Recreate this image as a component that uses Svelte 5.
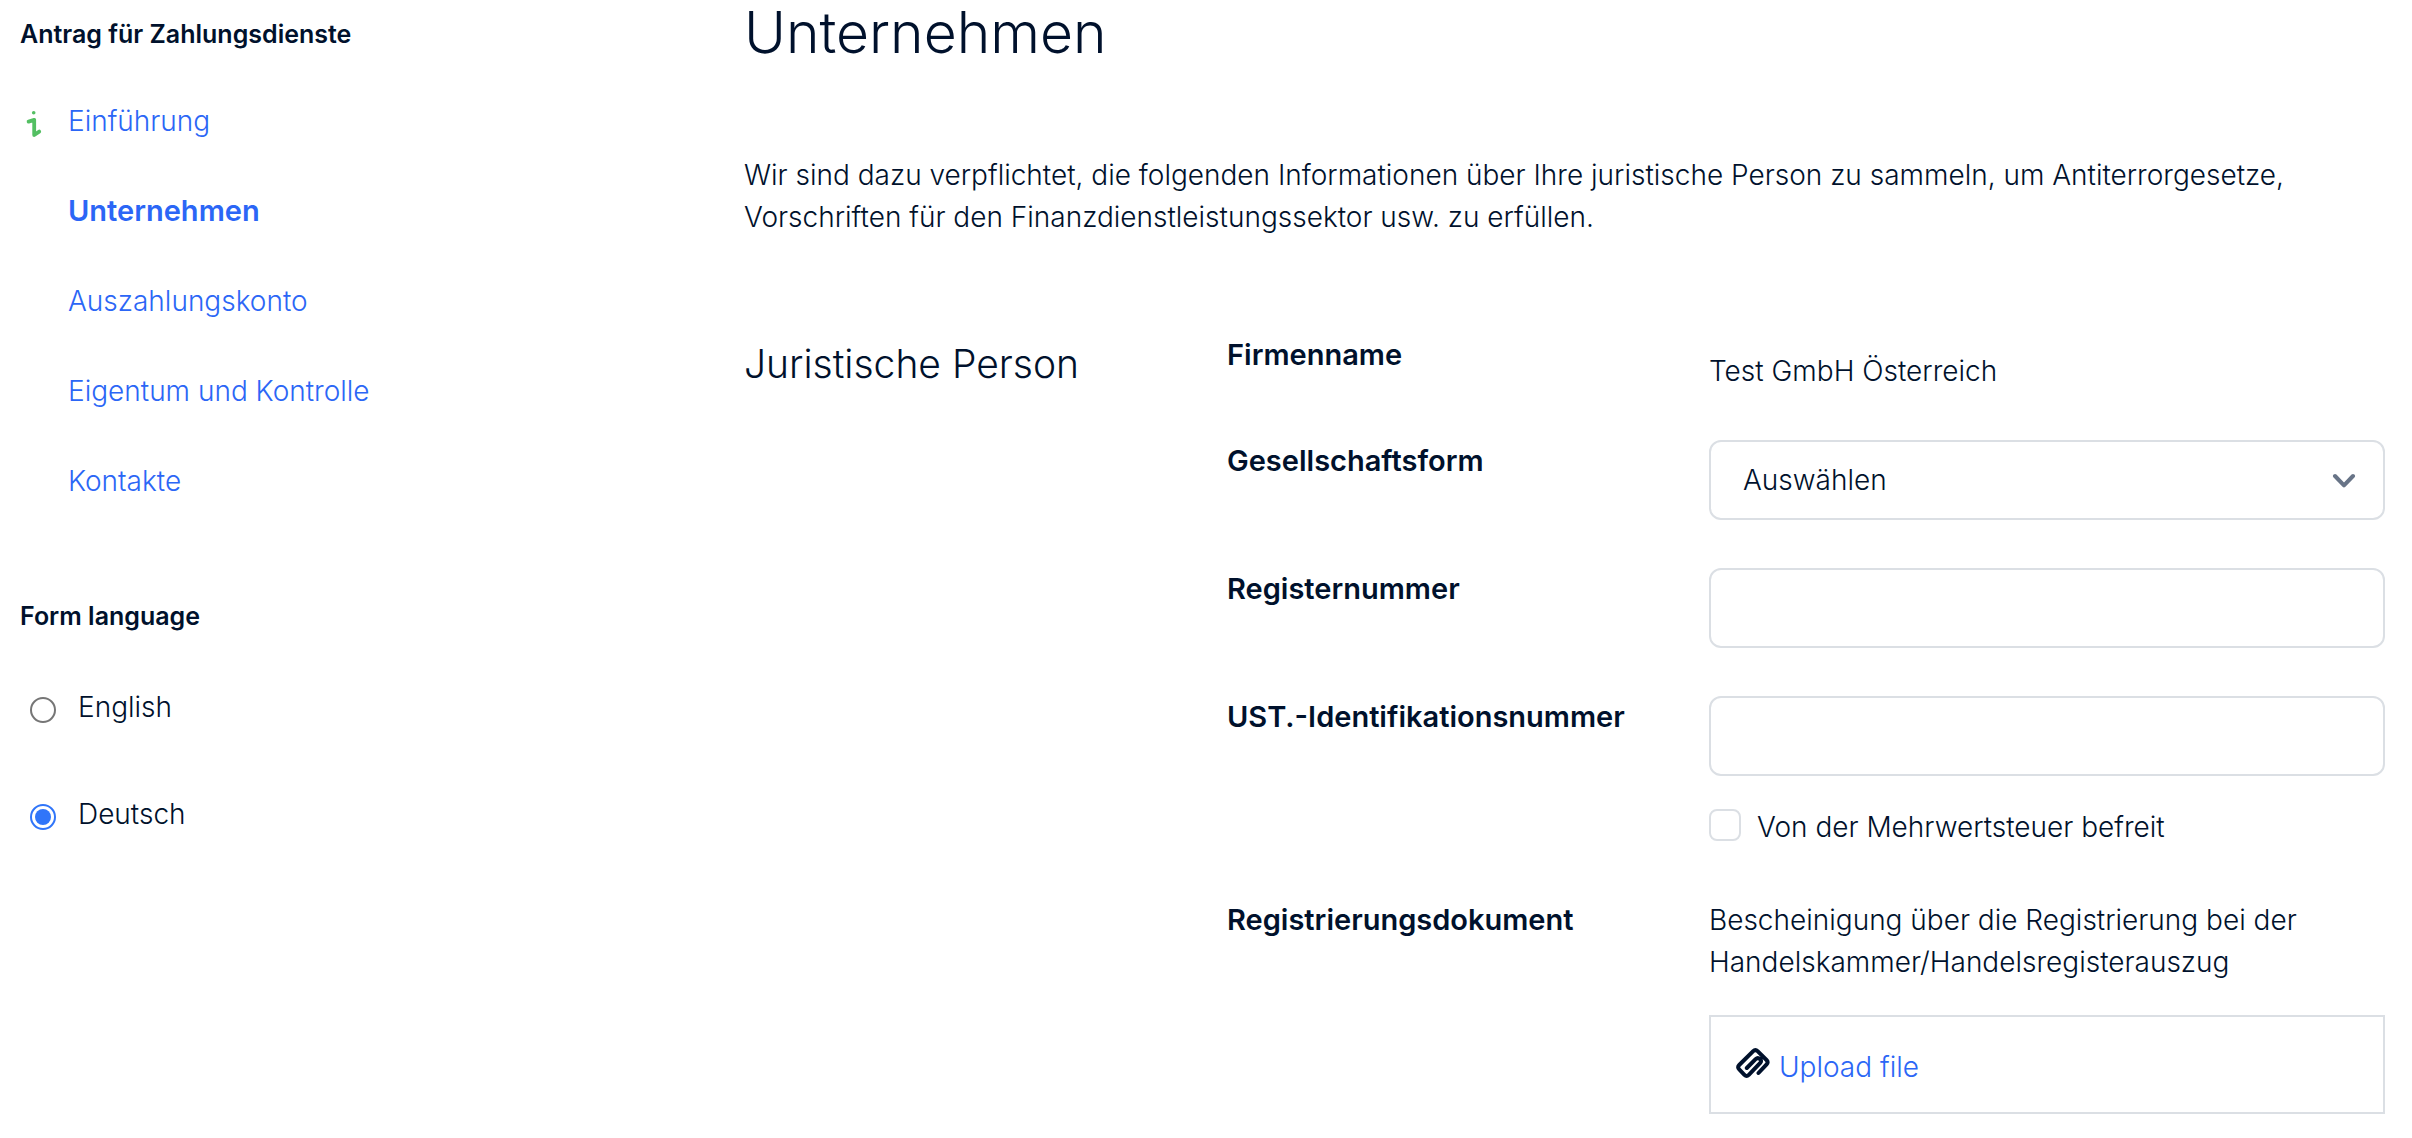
<script>
  let language = 'de';
  let legalForm = '';
  let registrationNumber = '';
  let vatNumber = '';
  let vatExempt = false;

  const steps = [
    { label: 'Einführung', href: '#einfuehrung', info: true },
    { label: 'Unternehmen', href: '#unternehmen', active: true },
    { label: 'Auszahlungskonto', href: '#auszahlungskonto' },
    { label: 'Eigentum und Kontrolle', href: '#eigentum' },
    { label: 'Kontakte', href: '#kontakte' },
  ];

  const languages = [
    { value: 'en', label: 'English' },
    { value: 'de', label: 'Deutsch' },
  ];
</script>

<div class="page">
  <aside>
    <h2>Antrag für Zahlungsdienste</h2>
    <nav>
      {#each steps as step}
        <a href={step.href} class:active={step.active}>
          <span class="marker">
            {#if step.info}
              <svg width="16" height="28" viewBox="0 0 16 28" fill="none" aria-hidden="true">
                <circle cx="7.7" cy="2.7" r="1.8" fill="#53bf62" />
                <path d="M2.6 11.6 L8.2 9.9 V25 L13.2 21.6" stroke="#53bf62" stroke-width="3.8" stroke-linecap="round" stroke-linejoin="round" />
              </svg>
            {/if}
          </span>
          {step.label}
        </a>
      {/each}
    </nav>

    <fieldset>
      <legend>Form language</legend>
      {#each languages as item}
        <label class="radio">
          <input type="radio" name="language" value={item.value} bind:group={language} />
          {item.label}
        </label>
      {/each}
    </fieldset>
  </aside>

  <main>
    <h1>Unternehmen</h1>
    <p class="intro">
      Wir sind dazu verpflichtet, die folgenden Informationen über Ihre juristische Person zu sammeln, um Antiterrorgesetze, Vorschriften für den Finanzdienstleistungssektor usw. zu erfüllen.
    </p>

    <section>
      <h3>Juristische Person</h3>
      <form>
        <div class="row">
          <span class="label">Firmenname</span>
          <div class="value">Test GmbH Österreich</div>
        </div>

        <div class="row">
          <label class="label" for="legal-form">Gesellschaftsform</label>
          <div class="select">
            <select id="legal-form" bind:value={legalForm}>
              <option value="">Auswählen</option>
              <option value="gmbh">GmbH</option>
              <option value="ag">AG</option>
            </select>
            <svg width="24" height="16" viewBox="0 0 24 16" fill="none" aria-hidden="true">
              <path d="M3 4 L12 13.4 L21 4" stroke="#687487" stroke-width="4" stroke-linecap="round" stroke-linejoin="round" />
            </svg>
          </div>
        </div>

        <div class="row">
          <label class="label" for="registration-number">Registernummer</label>
          <input class="text" id="registration-number" type="text" bind:value={registrationNumber} />
        </div>

        <div class="row">
          <label class="label" for="vat-number">UST.-Identifikationsnummer</label>
          <div>
            <input class="text" id="vat-number" type="text" bind:value={vatNumber} />
            <label class="checkbox">
              <input type="checkbox" bind:checked={vatExempt} />
              Von der Mehrwertsteuer befreit
            </label>
          </div>
        </div>

        <div class="row">
          <span class="label">Registrierungsdokument</span>
          <div>
            <p>Bescheinigung über die Registrierung bei der Handelskammer/Handelsregisterauszug</p>
            <div class="upload">
              <svg width="36" height="32" viewBox="0 0 36 32" fill="none" aria-hidden="true">
                <path d="M23.5 26 L31.6 17.4 Q33.6 15.2 31.5 13 L22.6 4.2 Q20.4 2 18.2 4.2 L4.2 18 Q2 20.2 4.2 22.4 L9.4 27.8 Q11.6 30 13.8 27.8 L25 16.2 Q27 14 25 12 Q22.8 10 20.6 12.2 L11.8 21" stroke="#00112c" stroke-width="4" stroke-linecap="round" stroke-linejoin="round" />
              </svg>
              <button type="button">Upload file</button>
            </div>
          </div>
        </div>
      </form>
    </section>
  </main>
</div>

<style>
  :global(body) {
    margin: 0;
    background: #fff;
  }

  .page {
    display: grid;
    grid-template-columns: 724px 1fr;
    padding: 0 27px 24px 20px;
    font-family: Inter, Roboto, sans-serif;
    font-size: 28px;
    font-weight: 300;
    line-height: 42px;
    color: #00112c;
  }

  h1, h2, h3, p {
    margin: 0;
  }

  h2, legend {
    font-size: 25px;
    font-weight: 600;
    line-height: 32px;
  }

  h2 {
    padding-top: 18px;
  }

  nav {
    display: flex;
    flex-direction: column;
    gap: 48px;
    padding-top: 50px;
  }

  nav a {
    display: flex;
    align-items: center;
    color: #2b66f6;
    text-decoration: none;
  }

  nav a.active {
    font-size: 29px;
    font-weight: 600;
  }

  .marker {
    display: flex;
    box-sizing: border-box;
    width: 48px;
    padding: 6px 0 0 6px;
  }

  fieldset {
    display: flex;
    flex-direction: column;
    gap: 65px;
    margin: 98px 0 0;
    padding: 0;
    border: 0;
  }

  legend {
    padding: 0 0 54px;
  }

  .radio {
    display: flex;
    align-items: center;
    gap: 22px;
    padding-left: 10px;
  }

  input[type='radio'] {
    display: grid;
    place-items: center;
    appearance: none;
    width: 26px;
    height: 26px;
    margin: 6px 0 0;
    border: 2px solid #767676;
    border-radius: 50%;
  }

  input[type='radio']:checked {
    border-color: #3075f9;
  }

  input[type='radio']:checked::before {
    content: '';
    width: 16px;
    height: 16px;
    border-radius: 50%;
    background: #3075f9;
  }

  h1 {
    font-size: 57px;
    font-weight: 300;
    line-height: 66px;
  }

  .intro {
    padding: 88px 0 0;
  }

  section {
    display: grid;
    grid-template-columns: 483px 1fr;
    padding-top: 96px;
  }

  h3 {
    font-size: 39px;
    font-weight: 300;
    line-height: 60px;
  }

  form {
    display: flex;
    flex-direction: column;
    gap: 48px;
  }

  .row {
    display: grid;
    grid-template-columns: 482px 1fr;
    align-items: start;
  }

  .label {
    font-size: 29px;
    font-weight: 600;
  }

  .value {
    padding-top: 16px;
  }

  .text,
  select {
    box-sizing: border-box;
    display: block;
    width: 100%;
    height: 80px;
    margin: 0;
    padding: 0 32px;
    border: 2px solid #dbdfe4;
    border-radius: 12px;
    background: #fff;
    color: inherit;
    font: inherit;
  }

  .select {
    display: grid;
    align-items: center;
  }

  .select > * {
    grid-area: 1 / 1;
  }

  .select svg {
    justify-self: end;
    margin-right: 29px;
    pointer-events: none;
  }

  select {
    appearance: none;
  }

  .checkbox {
    display: flex;
    align-items: center;
    gap: 16px;
    padding: 30px 0 3px;
  }

  input[type='checkbox'] {
    appearance: none;
    box-sizing: border-box;
    width: 32px;
    height: 32px;
    margin: 0 0 4px;
    border: 2px solid #dbdfe4;
    border-radius: 8px;
    background: #fff;
  }

  input[type='checkbox']:checked {
    border-color: #3075f9;
    background: #3075f9;
  }

  .upload {
    display: flex;
    align-items: center;
    gap: 8px;
    box-sizing: border-box;
    height: 99px;
    margin-top: 32px;
    padding: 0 24px;
    border: 2px solid #dbdfe4;
  }

  .upload svg {
    margin-bottom: 4px;
  }

  button {
    padding: 4px 0 0;
    border: 0;
    background: none;
    color: #2b66f6;
    font: inherit;
    cursor: pointer;
  }
</style>
